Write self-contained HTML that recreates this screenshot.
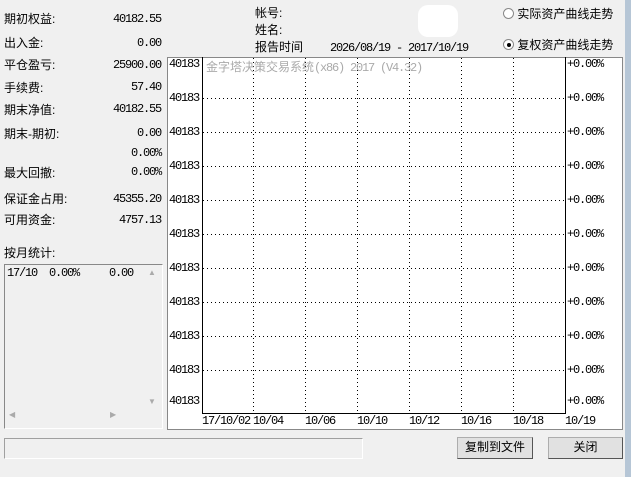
<!DOCTYPE html>
<html><head><meta charset="utf-8"><style>
*{margin:0;padding:0;box-sizing:border-box}
body{width:631px;height:477px;background:#f0f0f0;position:relative;overflow:hidden;font-family:"Liberation Sans","WenQuanYi Zen Hei",sans-serif;font-size:12px;color:#000}
.a{position:absolute;white-space:nowrap;line-height:14px}
.n{font-family:"Liberation Mono",monospace;font-size:12px;letter-spacing:-1.2px}
.r{text-align:right}
.btn{position:absolute;background:#e1e1e1;border:1px solid #adadad;border-right-color:#555;border-bottom-color:#555;text-align:center;line-height:19px;font-size:12px}
</style></head><body>
<div class="a" style="left:4px;top:12px">期初权益:</div><div class="a n r" style="left:90px;width:71px;top:12px">40182.55</div>
<div class="a" style="left:4px;top:36px">出入金:</div><div class="a n r" style="left:90px;width:71px;top:36px">0.00</div>
<div class="a" style="left:4px;top:58px">平仓盈亏:</div><div class="a n r" style="left:90px;width:71px;top:58px">25900.00</div>
<div class="a" style="left:4px;top:81px">手续费:</div><div class="a n r" style="left:90px;width:71px;top:80px">57.40</div>
<div class="a" style="left:4px;top:103px">期末净值:</div><div class="a n r" style="left:90px;width:71px;top:102px">40182.55</div>
<div class="a" style="left:4px;top:127px">期末-期初:</div><div class="a n r" style="left:90px;width:71px;top:126px">0.00</div>
<div class="a n r" style="left:90px;width:71px;top:146px">0.00%</div>
<div class="a" style="left:4px;top:166px">最大回撤:</div><div class="a n r" style="left:90px;width:71px;top:165px">0.00%</div>
<div class="a" style="left:4px;top:192px">保证金占用:</div><div class="a n r" style="left:90px;width:71px;top:192px">45355.20</div>
<div class="a" style="left:4px;top:213px">可用资金:</div><div class="a n r" style="left:90px;width:71px;top:213px">4757.13</div>
<div class="a" style="left:4px;top:246px">按月统计:</div>
<div style="position:absolute;left:4px;top:264px;width:159px;height:165px;border:1px solid #888;border-right-color:#fff;border-bottom-color:#fff;background:#f0f0f0"></div>
<div class="a n" style="left:7px;top:266px">17/10&nbsp;&nbsp;0.00%&nbsp;&nbsp;&nbsp;&nbsp;&nbsp;0.00</div>
<div class="a" style="left:148px;top:266px;font-size:8px;color:#aaa">▲</div>
<div class="a" style="left:148px;top:395px;font-size:8px;color:#aaa">▼</div>
<div class="a" style="left:9px;top:408px;font-size:8px;color:#aaa">◀</div>
<div class="a" style="left:110px;top:408px;font-size:8px;color:#aaa">▶</div>

<div class="a" style="left:255px;top:6px">帐号:</div>
<div class="a" style="left:255px;top:23px">姓名:</div>
<div class="a" style="left:255px;top:40px">报告时间</div>
<div class="a n" style="left:330px;top:41px">2026/08/19 - 2017/10/19</div>
<div style="position:absolute;left:418px;top:5px;width:40px;height:32px;background:#fff;border-radius:10px"></div>
<div class="a" style="left:503px;top:7px"><span style="display:inline-block;width:11px;height:11px;border:1px solid #888;border-radius:50%;background:#fff;vertical-align:-1px"></span> 实际资产曲线走势</div>
<div class="a" style="left:503px;top:38px"><span style="display:inline-block;width:11px;height:11px;border:1px solid #888;border-radius:50%;background:#fff;vertical-align:-1px;position:relative"><span style="position:absolute;left:2.5px;top:2.5px;width:4px;height:4px;background:#000;border-radius:50%"></span></span> 复权资产曲线走势</div>

<svg style="position:absolute;left:0;top:0" width="631" height="477" shape-rendering="crispEdges">
<rect x="167.5" y="57.5" width="455" height="372" fill="#fff" stroke="#888"/>
<line x1="202.5" y1="57" x2="202.5" y2="413.5" stroke="#000"/>
<line x1="565.5" y1="57" x2="565.5" y2="413.5" stroke="#000"/>
<line x1="202" y1="413.5" x2="566" y2="413.5" stroke="#000"/>
<g stroke="#000" stroke-dasharray="1,3">
<line x1="253.5" y1="58" x2="253.5" y2="413"/><line x1="305.5" y1="58" x2="305.5" y2="413"/><line x1="357.5" y1="58" x2="357.5" y2="413"/><line x1="409.5" y1="58" x2="409.5" y2="413"/><line x1="461.5" y1="58" x2="461.5" y2="413"/><line x1="513.5" y1="58" x2="513.5" y2="413"/>
<line x1="203" y1="98.5" x2="565" y2="98.5"/><line x1="203" y1="132.5" x2="565" y2="132.5"/><line x1="203" y1="166.5" x2="565" y2="166.5"/><line x1="203" y1="200.5" x2="565" y2="200.5"/><line x1="203" y1="234.5" x2="565" y2="234.5"/><line x1="203" y1="268.5" x2="565" y2="268.5"/><line x1="203" y1="302.5" x2="565" y2="302.5"/><line x1="203" y1="336.5" x2="565" y2="336.5"/><line x1="203" y1="370.5" x2="565" y2="370.5"/>
</g>
<rect x="625" y="0" width="6" height="477" fill="#b6c6d6"/>
</svg>
<div class="a" style="left:206px;top:60px;color:#aaa">金字塔决策交易系统<span class="n">(x86) 2017 (V4.32)</span></div>
<div class="a n" style="left:169px;top:57px">40183</div><div class="a n" style="left:567px;top:57px">+0.00%</div>
<div class="a n" style="left:169px;top:91px">40183</div><div class="a n" style="left:567px;top:91px">+0.00%</div>
<div class="a n" style="left:169px;top:125px">40183</div><div class="a n" style="left:567px;top:125px">+0.00%</div>
<div class="a n" style="left:169px;top:159px">40183</div><div class="a n" style="left:567px;top:159px">+0.00%</div>
<div class="a n" style="left:169px;top:193px">40183</div><div class="a n" style="left:567px;top:193px">+0.00%</div>
<div class="a n" style="left:169px;top:227px">40183</div><div class="a n" style="left:567px;top:227px">+0.00%</div>
<div class="a n" style="left:169px;top:261px">40183</div><div class="a n" style="left:567px;top:261px">+0.00%</div>
<div class="a n" style="left:169px;top:295px">40183</div><div class="a n" style="left:567px;top:295px">+0.00%</div>
<div class="a n" style="left:169px;top:329px">40183</div><div class="a n" style="left:567px;top:329px">+0.00%</div>
<div class="a n" style="left:169px;top:363px">40183</div><div class="a n" style="left:567px;top:363px">+0.00%</div>
<div class="a n" style="left:169px;top:394px">40183</div><div class="a n" style="left:567px;top:394px">+0.00%</div>
<div class="a n" style="left:202px;top:414px">17/10/02</div>
<div class="a n" style="left:253px;top:414px">10/04</div>
<div class="a n" style="left:305px;top:414px">10/06</div>
<div class="a n" style="left:357px;top:414px">10/10</div>
<div class="a n" style="left:409px;top:414px">10/12</div>
<div class="a n" style="left:461px;top:414px">10/16</div>
<div class="a n" style="left:513px;top:414px">10/18</div>
<div class="a n" style="left:565px;top:414px">10/19</div>

<div style="position:absolute;left:4px;top:438px;width:359px;height:21px;border:1px solid #a0a0a0;border-right-color:#fff;border-bottom-color:#fff"></div>
<div class="btn" style="left:457px;top:437px;width:76px;height:22px">复制到文件</div>
<div class="btn" style="left:548px;top:437px;width:75px;height:22px">关闭</div>
</body></html>
